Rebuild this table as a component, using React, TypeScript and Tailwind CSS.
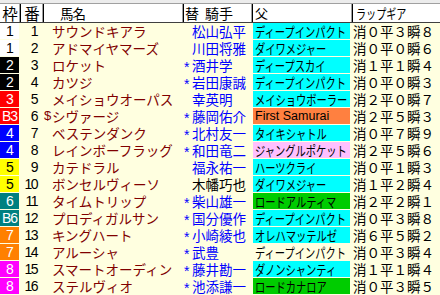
import React from "react";

type Row = {
  w: string;
  wc: string;
  n: number;
  pre: string;
  name: string;
  star: boolean;
  j: string;
  jc: string;
  sire: string;
  sb: string;
  latin?: boolean;
  lap: string;
};

const rows: Row[] = [
  { w: "1", wc: "bg-white text-black", n: 1, pre: "", name: "サウンドキアラ", star: false, j: "松山弘平", jc: "text-[#0000ff]", sire: "ディープインパクト", sb: "bg-[#00ffff]", lap: "消０平３瞬８" },
  { w: "1", wc: "bg-white text-black", n: 2, pre: "", name: "アドマイヤマーズ", star: false, j: "川田将雅", jc: "text-[#0000ff]", sire: "ダイワメジャー", sb: "bg-[#00ffff]", lap: "消０平０瞬６" },
  { w: "2", wc: "bg-black text-white", n: 3, pre: "", name: "ロケット", star: true, j: "酒井学", jc: "text-[#0000ff]", sire: "ディープスカイ", sb: "bg-[#00ffff]", lap: "消１平１瞬４" },
  { w: "2", wc: "bg-black text-white", n: 4, pre: "", name: "カツジ", star: true, j: "岩田康誠", jc: "text-[#0000ff]", sire: "ディープインパクト", sb: "bg-[#00ffff]", lap: "消０平０瞬３" },
  { w: "3", wc: "bg-[#ff0000] text-white", n: 5, pre: "", name: "メイショウオーパス", star: false, j: "幸英明", jc: "text-[#0000ff]", sire: "メイショウボーラー", sb: "bg-[#00ffff]", lap: "消２平０瞬７" },
  { w: "B3", wc: "bg-[#ff0000] text-white", n: 6, pre: "$", name: "シヴァージ", star: true, j: "藤岡佑介", jc: "text-[#0000ff]", sire: "First Samurai", sb: "bg-[#ff8040]", latin: true, lap: "消２平５瞬３" },
  { w: "4", wc: "bg-[#0000ff] text-white", n: 7, pre: "", name: "ベステンダンク", star: true, j: "北村友一", jc: "text-[#0000ff]", sire: "タイキシャトル", sb: "bg-[#00ffff]", lap: "消０平７瞬９" },
  { w: "4", wc: "bg-[#0000ff] text-white", n: 8, pre: "", name: "レインボーフラッグ", star: true, j: "和田竜二", jc: "text-[#0000ff]", sire: "ジャングルポケット", sb: "bg-[#ffc0ff]", lap: "消２平５瞬６" },
  { w: "5", wc: "bg-[#ffff00] text-black", n: 9, pre: "", name: "カテドラル", star: false, j: "福永祐一", jc: "text-[#0000ff]", sire: "ハーツクライ", sb: "bg-[#00ffff]", lap: "消０平１瞬３" },
  { w: "5", wc: "bg-[#ffff00] text-black", n: 10, pre: "", name: "ボンセルヴィーソ", star: false, j: "木幡巧也", jc: "text-black", sire: "ダイワメジャー", sb: "bg-[#00ffff]", lap: "消１平２瞬４" },
  { w: "6", wc: "bg-[#008080] text-white", n: 11, pre: "", name: "タイムトリップ", star: true, j: "柴山雄一", jc: "text-[#0000ff]", sire: "ロードアルティマ", sb: "bg-[#00cc00]", lap: "消２平２瞬１" },
  { w: "B6", wc: "bg-[#008080] text-white", n: 12, pre: "", name: "プロディガルサン", star: true, j: "国分優作", jc: "text-[#0000ff]", sire: "ディープインパクト", sb: "bg-[#00ffff]", lap: "消０平３瞬８" },
  { w: "7", wc: "bg-[#ff8000] text-white", n: 13, pre: "", name: "キングハート", star: true, j: "小崎綾也", jc: "text-[#0000ff]", sire: "オレハマッテルゼ", sb: "bg-[#00ffff]", lap: "消６平５瞬２" },
  { w: "7", wc: "bg-[#ff8000] text-white", n: 14, pre: "", name: "アルーシャ", star: true, j: "武豊", jc: "text-[#0000ff]", sire: "ディープインパクト", sb: "", lap: "消０平３瞬４" },
  { w: "8", wc: "bg-[#ff00ff] text-white", n: 15, pre: "", name: "スマートオーディン", star: true, j: "藤井勘一", jc: "text-[#0000ff]", sire: "ダノンシャンティ", sb: "bg-[#00ffff]", lap: "消１平１瞬４" },
  { w: "8", wc: "bg-[#ff00ff] text-white", n: 16, pre: "", name: "ステルヴィオ", star: true, j: "池添謙一", jc: "text-[#0000ff]", sire: "ロードカナロア", sb: "bg-[#00cc00]", lap: "消０平３瞬５" },
];

const jp = "font-['Noto_Sans_CJK_JP',sans-serif]";
const num = "font-['Liberation_Sans',Arial,sans-serif]";
const cols = "grid grid-cols-[20px_23px_140px_69px_100px_88px]";
const sep = "border-l border-black shadow-[-1px_0_0_#a0a0a0]";

export default function App() {
  return (
    <div className={`w-[440px] h-[295px] overflow-hidden bg-[#ffffe0] ${jp}`}>
      <div className="h-[4px] bg-[#ececec] border-b border-[#a0a0a0]" />
      <div className={`${cols} h-[19px] bg-white border-b border-[#404040] text-black leading-[18px]`}>
        <div className="flex items-center justify-center text-[15.5px]">枠</div>
        <div className={`flex items-center justify-center text-[15.5px] ${sep}`}>番</div>
        <div className={`flex items-center pl-[16px] text-[13.5px] tracking-[-1px] ${sep}`}>馬名</div>
        <div className={`flex items-center pl-[1px] text-[14px] ${sep}`}>
          <span>替</span>
          <span className="ml-[6px]">騎手</span>
        </div>
        <div className={`flex items-center pl-[2px] text-[13px] ${sep}`}>父</div>
        <div className={`flex items-center pl-[3px] ${sep}`}>
          <span className="inline-block origin-left [transform:scaleX(0.72)] text-[14px] whitespace-nowrap">ラップギア</span>
        </div>
      </div>
      <div className="flex flex-col gap-[1px]">
        {rows.map((r) => (
          <div key={r.n} className={`${cols} h-[16px] leading-[16px]`}>
            <div className={`w-[19px] h-full flex items-center justify-center ${r.wc}`}>
              <span className={`text-[14px] tracking-[-1px] ${num}`}>{r.w}</span>
            </div>
            <div className="flex items-center justify-end pr-[6px] text-black">
              <span className={`text-[14px] tracking-[-1.5px] ${num}`}>{r.n}</span>
            </div>
            <div className="flex items-center pl-[1px] text-[#800000] text-[13.5px] whitespace-nowrap">
              <span className={`w-[8px] text-[13px] ${num}`}>{r.pre}</span>
              <span>{r.name}</span>
            </div>
            <div className={`flex items-center pl-[1px] text-[13.5px] whitespace-nowrap ${r.jc}`}>
              <span className={`w-[8px] text-[14px] text-[#0000ff] translate-y-[2px] ${num}`}>{r.star ? "*" : ""}</span>
              <span>{r.j}</span>
            </div>
            <div className="flex items-stretch">
              <div className={`ml-[1px] w-[97px] h-full flex items-center pl-[2px] whitespace-nowrap text-black ${r.sb}`}>
                {r.latin ? (
                  <span className={`text-[12.5px] ${num}`}>{r.sire}</span>
                ) : (
                  <span className="inline-block origin-left [transform:scaleX(0.76)] text-[13.5px]">{r.sire}</span>
                )}
              </div>
            </div>
            <div className="flex items-center pl-[1px] text-black text-[13.5px] whitespace-nowrap">{r.lap}</div>
          </div>
        ))}
      </div>
    </div>
  );
}
